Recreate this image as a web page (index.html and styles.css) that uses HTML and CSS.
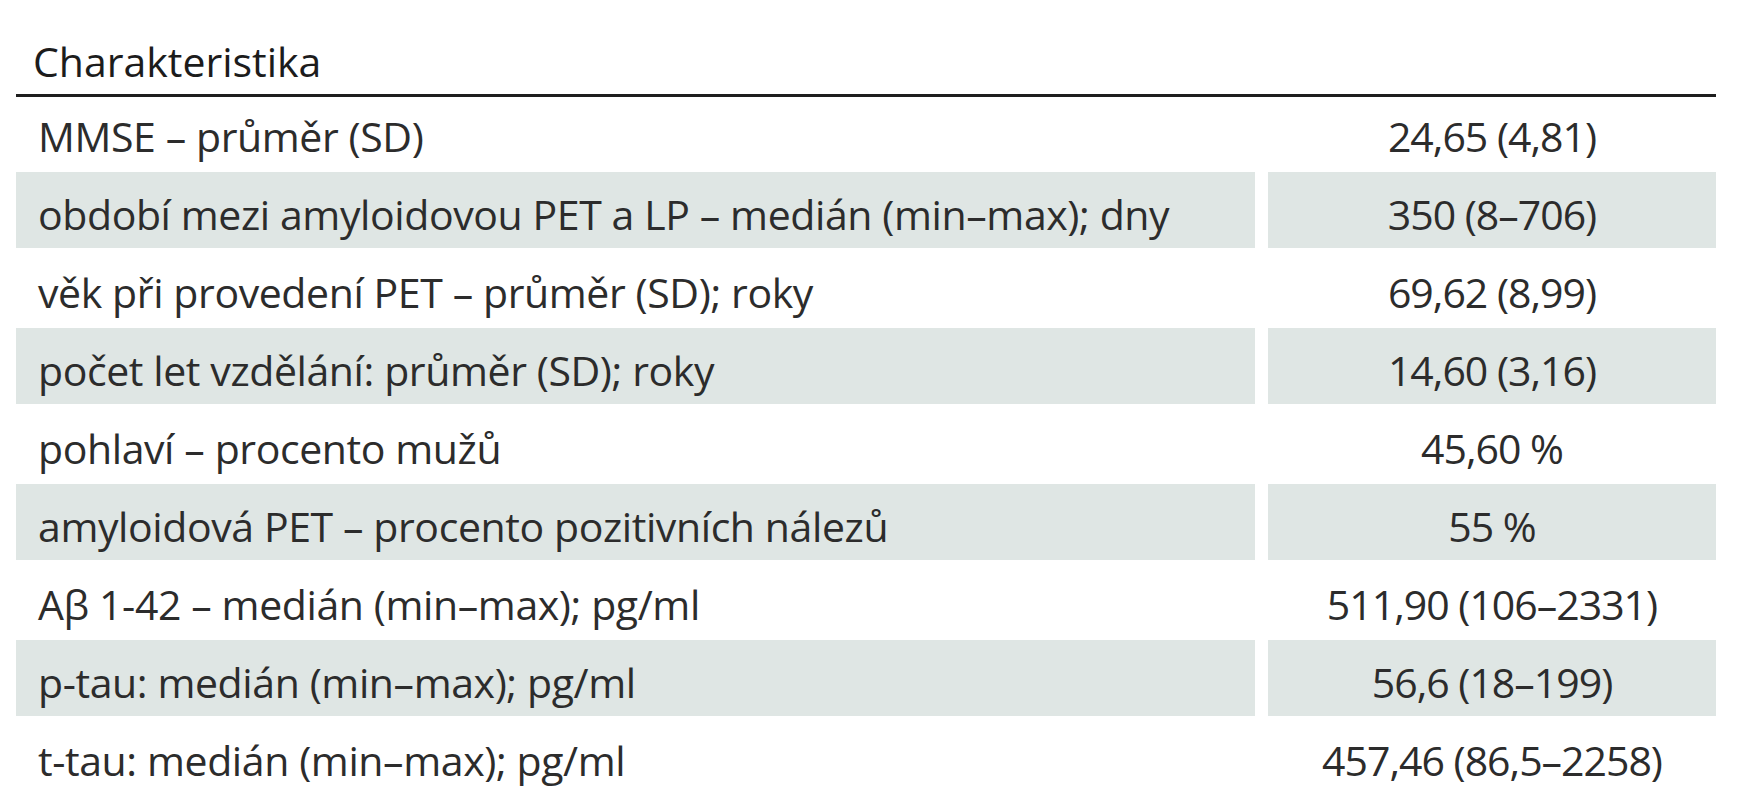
FILE: index.html
```html
<!DOCTYPE html>
<html lang="cs">
<head>
<meta charset="utf-8">
<title>Charakteristika</title>
<link rel="stylesheet" href="styles.css">
</head>
<body>
<div class="table">
  <div class="head">Charakteristika</div>
  <div class="rows">
    <div class="row first"><div class="cell label">MMSE – průměr (SD)</div><div class="cell value">24,65 (4,81)</div></div>
    <div class="row"><div class="cell label">období mezi amyloidovou PET a LP – medián (min–max); dny</div><div class="cell value">350 (8–706)</div></div>
    <div class="row"><div class="cell label">věk při provedení PET – průměr (SD); roky</div><div class="cell value">69,62 (8,99)</div></div>
    <div class="row"><div class="cell label">počet let vzdělání: průměr (SD); roky</div><div class="cell value">14,60 (3,16)</div></div>
    <div class="row"><div class="cell label">pohlaví – procento mužů</div><div class="cell value">45,60 %</div></div>
    <div class="row"><div class="cell label">amyloidová PET – procento pozitivních nálezů</div><div class="cell value">55 %</div></div>
    <div class="row"><div class="cell label">Aβ 1-42 – medián (min–max); pg/ml</div><div class="cell value">511,90 (106–2331)</div></div>
    <div class="row"><div class="cell label">p-tau: medián (min–max); pg/ml</div><div class="cell value">56,6 (18–199)</div></div>
    <div class="row"><div class="cell label">t-tau: medián (min–max); pg/ml</div><div class="cell value">457,46 (86,5–2258)</div></div>
  </div>
</div>
</body>
</html>
```
FILE: styles.css
```css
html, body {
  margin: 0;
  padding: 0;
  background: #ffffff;
}
body {
  font-family: "Open Sans", "Noto Sans", sans-serif;
  font-size: 41px;
  letter-spacing: -0.4px;
  color: #2c2c2c;
  overflow: hidden;
}
.table {
  width: 1700px;
  margin-left: 16px;
}
.head {
  padding: 31px 0 3px 17px;
  line-height: 60px;
  letter-spacing: 0;
  color: #1c1c1c;
  border-bottom: 3px solid #1e1e1e;
}
.rows {
  display: flex;
  flex-direction: column;
  gap: 2px;
}
.row {
  display: grid;
  grid-template-columns: 1239px 448px;
  column-gap: 13px;
  height: 76px;
}
.row.first {
  height: 73px;
}
.cell {
  box-sizing: border-box;
  padding-top: 8px;
  line-height: 68px;
  white-space: nowrap;
}
.row.first .cell {
  padding-top: 5px;
}
.row:nth-child(even) .cell {
  background: #dfe6e4;
}
.label {
  padding-left: 22px;
}
.value {
  text-align: center;
  letter-spacing: -1px;
}
```
